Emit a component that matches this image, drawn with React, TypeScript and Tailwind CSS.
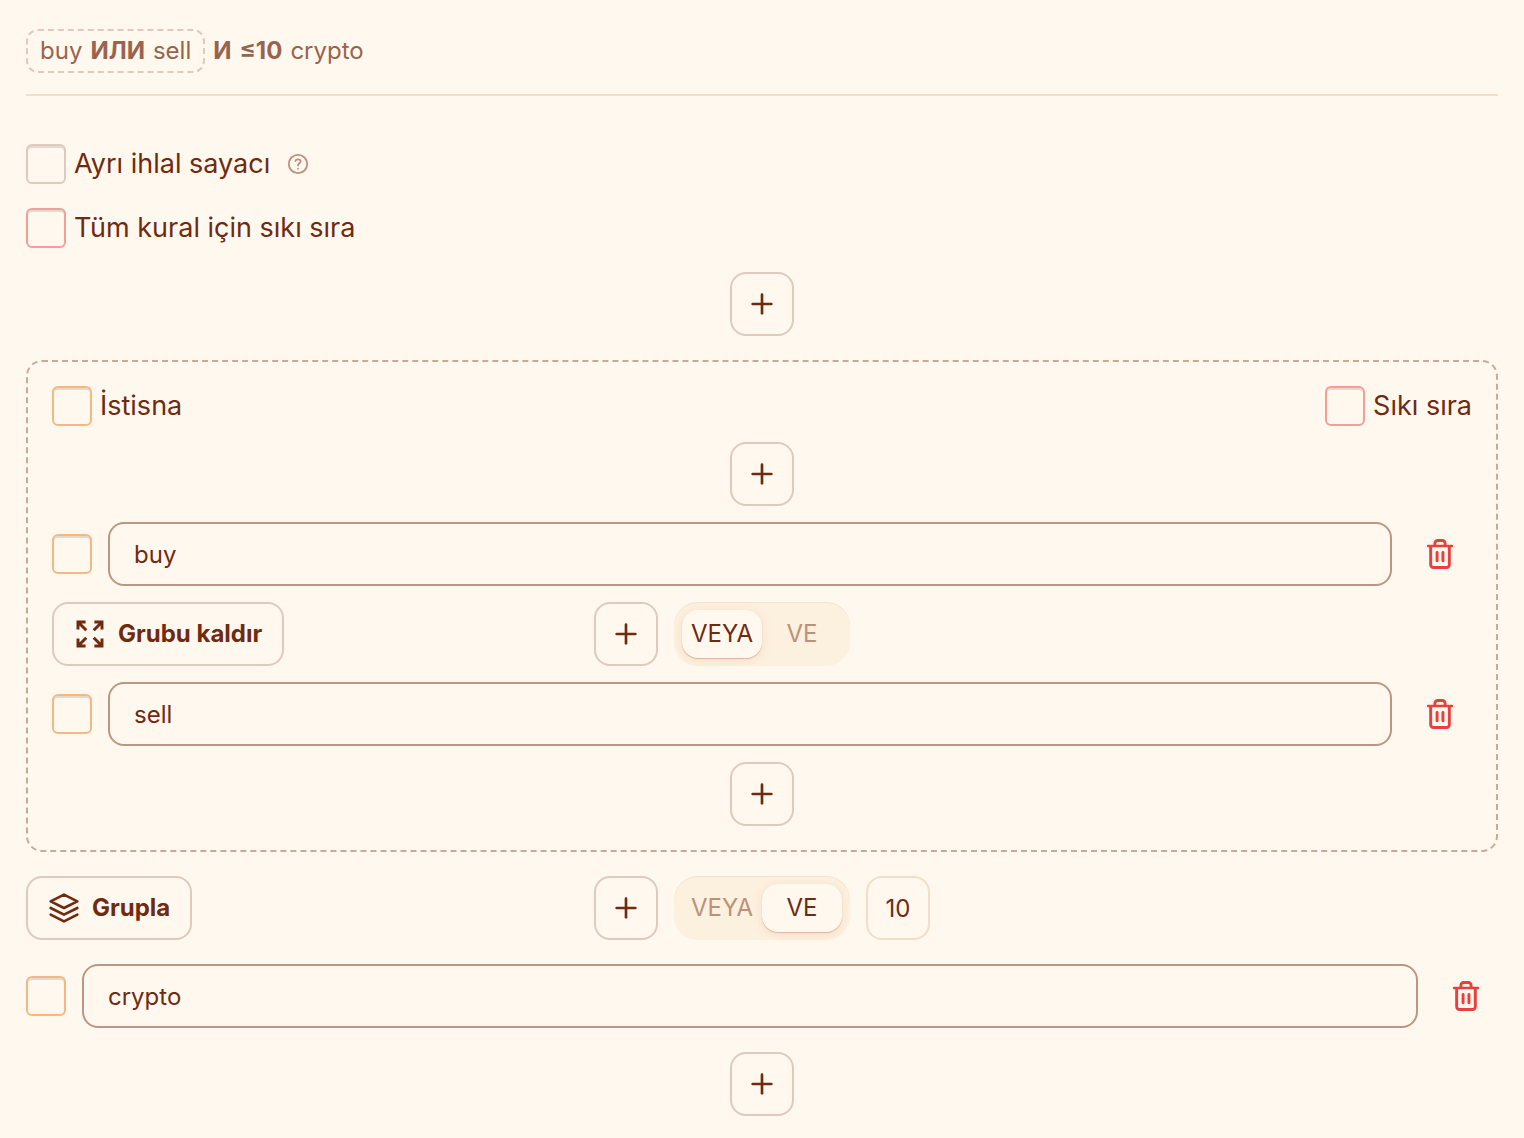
import { useState } from "react";
import { Plus } from "lucide-react";

type Operator = "or" | "and";

function TrashIcon() {
  return (
    <svg viewBox="0 0 24 24" fill="none" stroke="currentColor" className="size-8">
      <path
        d="M5 6.2v13.9a2 2 0 0 0 2 2h10a2 2 0 0 0 2-2V6.2M8.2 6V3.9a2 2 0 0 1 2-2h3.6a2 2 0 0 1 2 2V6"
        strokeWidth="2.2"
      />
      <path d="M3 6h18" strokeWidth="1.8" strokeLinecap="round" />
      <path d="M9.8 10.9v6.2M14.2 10.9v6.2" strokeWidth="2.2" strokeLinecap="round" />
    </svg>
  );
}

function ExpandIcon() {
  return (
    <svg viewBox="0 0 24 24" fill="none" stroke="currentColor" strokeWidth="2.2" className="size-8">
      <path d="M3 8.7V3h5.7M3 3l6.2 6.2M15.3 3H21v5.7M21 3l-6.2 6.2M21 15.3V21h-5.7M21 21l-6.2-6.2M8.7 21H3v-5.7M3 21l6.2-6.2" />
    </svg>
  );
}

function LayersIcon() {
  return (
    <svg
      viewBox="0 0 24 24"
      fill="none"
      stroke="currentColor"
      strokeWidth="2"
      strokeLinecap="round"
      strokeLinejoin="round"
      className="size-8"
    >
      <path d="M12 2 2 7l10 5 10-5-10-5zM2 17l10 5 10-5M2 12l10 5 10-5" />
    </svg>
  );
}

function HelpIcon() {
  return (
    <svg
      viewBox="0 0 24 24"
      fill="none"
      stroke="currentColor"
      strokeWidth="1.8"
      strokeLinecap="round"
      strokeLinejoin="round"
      className="size-6"
    >
      <circle cx="12" cy="12" r="9.2" />
      <path d="M9.4 9.1c.3-1 1.3-1.7 2.6-1.7 1.5 0 2.6.9 2.6 2.1 0 1.8-2.6 1.9-2.6 3.9M12 16.7v.1" />
    </svg>
  );
}

interface CheckProps {
  tone: "neutral" | "error" | "warning";
  label: string;
  hideLabel?: boolean;
}

const toneClasses = {
  neutral: "border-[#e0cabd]",
  error: "border-[#f59e98]",
  warning: "border-[#f9b77f]",
};

function Check({ tone, label, hideLabel }: CheckProps) {
  return (
    <label className="flex items-center gap-2 text-[27px] leading-10">
      <input
        type="checkbox"
        aria-label={label}
        className={`size-10 shrink-0 appearance-none rounded-md border-2 shadow-[inset_0_2px_0_#e2dad0] checked:bg-[#fcf0de] ${toneClasses[tone]}`}
      />
      {!hideLabel && <span>{label}</span>}
    </label>
  );
}

function AddButton() {
  return (
    <button
      type="button"
      aria-label="Ekle"
      className="flex size-16 items-center justify-center justify-self-center rounded-2xl border-2 border-[#e0cabd] hover:bg-[#fcf0de]"
    >
      <Plus size={32} strokeWidth={2} />
    </button>
  );
}

interface WordRowProps {
  value: string;
  onChange: (value: string) => void;
}

function WordRow({ value, onChange }: WordRowProps) {
  return (
    <div className="flex items-center gap-4">
      <Check tone="warning" label="İstisna" hideLabel />
      <input
        type="text"
        aria-label="Kelime"
        value={value}
        onChange={(e) => onChange(e.target.value)}
        className="h-16 min-w-0 flex-1 rounded-2xl border-2 border-[#bd9684] bg-transparent px-6 text-2xl outline-none"
      />
      <button
        type="button"
        aria-label="Sil"
        className="flex size-16 items-center justify-center rounded-2xl text-[#e7403f] hover:bg-[#fcf0de]"
      >
        <TrashIcon />
      </button>
    </div>
  );
}

interface OperatorToggleProps {
  value: Operator;
  onChange: (value: Operator) => void;
}

function OperatorToggle({ value, onChange }: OperatorToggleProps) {
  const options: { id: Operator; label: string }[] = [
    { id: "or", label: "VEYA" },
    { id: "and", label: "VE" },
  ];

  return (
    <div className="flex h-16 rounded-3xl bg-[#fcf0de] p-2 shadow-[inset_0_1px_0_#f1e3d0]">
      {options.map((option) => (
        <button
          key={option.id}
          type="button"
          aria-pressed={value === option.id}
          onClick={() => onChange(option.id)}
          className={`w-20 rounded-2xl text-2xl ${
            value === option.id
              ? "bg-[#fff8ee] shadow-[0_1px_1px_#dfb49c,0_2px_10px_#f6dcc6]"
              : "text-[#bc917c]"
          }`}
        >
          {option.label}
        </button>
      ))}
    </div>
  );
}

const groupButton =
  "flex h-16 items-center gap-3 rounded-2xl border-2 border-[#e0cabd] px-5 text-2xl font-bold hover:bg-[#fcf0de]";

export default function App() {
  const [words, setWords] = useState(["buy", "sell", "crypto"]);
  const [innerOperator, setInnerOperator] = useState<Operator>("or");
  const [outerOperator, setOuterOperator] = useState<Operator>("and");
  const [distance, setDistance] = useState("10");

  const updateWord = (index: number, value: string) => {
    setWords((prev) => prev.map((word, i) => (i === index ? value : word)));
  };

  return (
    <main className="min-h-screen bg-[#fff8ee] px-[26px] pt-[29px] pb-[22px] font-['Inter',sans-serif] text-[#702a10]">
      {/* Rule preview */}
      <div className="flex items-center gap-2 border-b-2 border-[#f2dfc9] pb-[21px] text-2xl text-[#99644e]">
        <span className="flex h-11 items-center gap-2 rounded-xl border-2 border-dashed border-[#e0cabd] px-3">
          <span>{words[0]}</span>
          <b>ИЛИ</b>
          <span>{words[1]}</span>
        </span>
        <b>И</b>
        <b>≤{distance}</b>
        <span>{words[2]}</span>
      </div>

      <div className="grid gap-6 pt-12">
        <div className="flex items-center gap-4">
          <Check tone="neutral" label="Ayrı ihlal sayacı" />
          <button type="button" aria-label="Yardım" className="text-[#bc917c]">
            <HelpIcon />
          </button>
        </div>
        <Check tone="error" label="Tüm kural için sıkı sıra" />
        <AddButton />

        {/* Grouped words */}
        <section className="grid gap-4 rounded-2xl border-2 border-dashed border-[#cba998] p-6">
          <div className="flex items-center justify-between">
            <Check tone="warning" label="İstisna" />
            <Check tone="error" label="Sıkı sıra" />
          </div>
          <AddButton />
          <WordRow value={words[0]} onChange={(v) => updateWord(0, v)} />
          <div className="grid grid-cols-[1fr_auto_1fr] gap-4">
            <div className="flex justify-between">
              <button type="button" className={groupButton}>
                <ExpandIcon />
                Grubu kaldır
              </button>
              <AddButton />
            </div>
            <OperatorToggle value={innerOperator} onChange={setInnerOperator} />
          </div>
          <WordRow value={words[1]} onChange={(v) => updateWord(1, v)} />
          <AddButton />
        </section>

        <div className="grid grid-cols-[1fr_auto_1fr] gap-4">
          <div className="flex justify-between">
            <button type="button" className={groupButton}>
              <LayersIcon />
              Grupla
            </button>
            <AddButton />
          </div>
          <OperatorToggle value={outerOperator} onChange={setOuterOperator} />
          <input
            type="text"
            inputMode="numeric"
            aria-label="Mesafe"
            value={distance}
            onChange={(e) => setDistance(e.target.value)}
            className="size-16 rounded-2xl border-2 border-[#f2dfc9] bg-transparent text-center text-2xl outline-none"
          />
        </div>
        <WordRow value={words[2]} onChange={(v) => updateWord(2, v)} />
        <AddButton />
      </div>
    </main>
  );
}
